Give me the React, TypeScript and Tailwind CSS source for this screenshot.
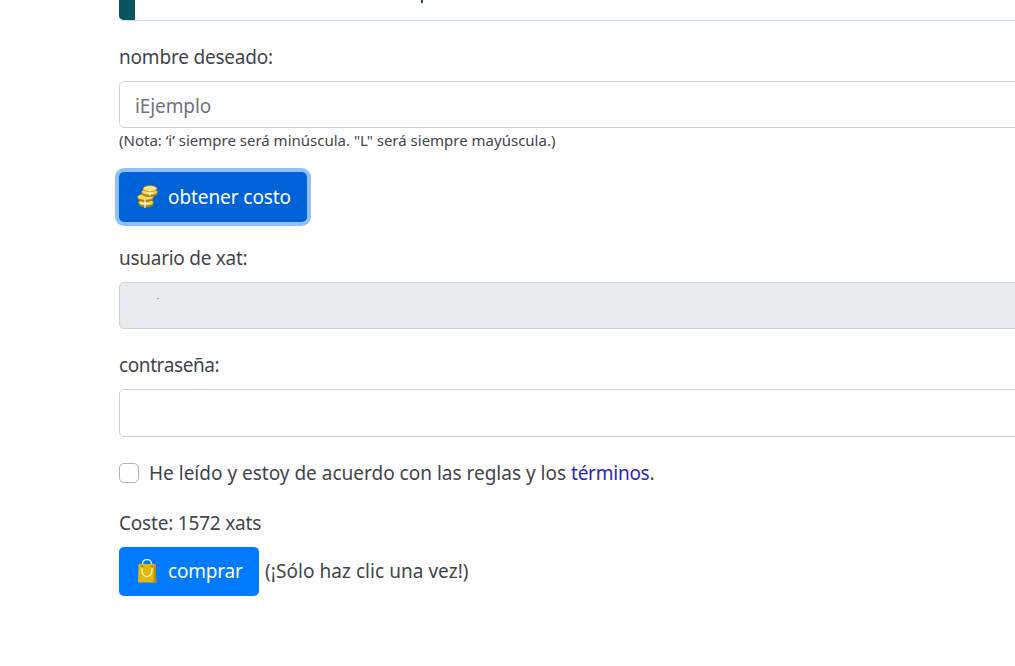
const FONT = "font-['Noto_Sans','Open_Sans',sans-serif]";

function CoinsIcon() {
  return (
    <svg width="22" height="24" viewBox="0 0 22 24" className="shrink-0">
      <ellipse cx="9" cy="19" rx="7.5" ry="3.6" fill="#a87f14" />
      <ellipse cx="9" cy="17.6" rx="7.5" ry="3.2" fill="#f7d24a" stroke="#9a7410" strokeWidth="0.6" />
      <ellipse cx="8.5" cy="13.5" rx="8" ry="3.4" fill="#a87f14" />
      <ellipse cx="8.5" cy="12" rx="8" ry="3.2" fill="#fadb58" stroke="#9a7410" strokeWidth="0.6" />
      <ellipse cx="12.5" cy="8.5" rx="8" ry="3.4" fill="#a87f14" />
      <ellipse cx="12.5" cy="7" rx="8" ry="3.2" fill="#f8d64e" stroke="#9a7410" strokeWidth="0.6" />
      <ellipse cx="13" cy="3.6" rx="7" ry="3" fill="#fde574" stroke="#9a7410" strokeWidth="0.6" />
      <path d="M8 23v-9M3.5 18.5h9" stroke="#fffdf0" strokeWidth="1.1" />
      <path d="M13 11V5M10 8h6" stroke="#fffdf0" strokeWidth="0.9" />
      <path d="M14 3h4" stroke="#fffdf0" strokeWidth="0.9" />
    </svg>
  );
}

function BagIcon() {
  return (
    <svg width="19" height="24" viewBox="0 0 19 24" className="shrink-0">
      <path d="M4.5 6V4.5A4 3.6 0 0 1 13.5 4.5V6" fill="none" stroke="#d7ebfd" strokeWidth="1.4" />
      <path d="M0.5 5h17l0.8 18.5H0z" fill="#e4b70e" />
      <path d="M16 5h1.5l0.8 18.5H15.5z" fill="#b98f06" />
      <path d="M4 8v4a5 5.5 0 0 0 10 0V8" fill="none" stroke="#fff8d8" strokeWidth="1.2" />
      <rect x="3.5" y="6.5" width="1.2" height="2" fill="#6b5a10" />
      <rect x="13.4" y="6.5" width="1.2" height="2" fill="#6b5a10" />
    </svg>
  );
}

export default function App() {
  return (
    <div className={`w-[1015px] h-[666px] overflow-hidden bg-white pl-[119px] text-[19px] leading-[28px] text-[#3f454b] ${FONT}`}>
      <div className="w-[1000px]">
        {/* alert, cut off by the top of the window */}
        <div className="flex h-[21px] overflow-hidden rounded-bl-[5px] border-b border-[#bee5eb]">
          <div className="w-4 bg-[#0c5460]" />
          <div className="ml-[286px] h-[3px] w-[2px] bg-[#0c5460]" />
        </div>

        <label className="mt-[22px] block tracking-[-0.2px]">nombre deseado:</label>
        <input
          placeholder="iEjemplo"
          className="mt-[10px] block h-[47px] w-full rounded-[5px] border border-[#ced4da] bg-white px-[15px] pt-[2px] tracking-[-0.1px] placeholder:text-[#6c757d]"
        />
        <p className="mt-[2px] text-[15px] leading-[21px]">(Nota: ‘i’ siempre será minúscula. "L" será siempre mayúscula.)</p>

        <button className="mt-[21px] flex h-[50px] w-[188px] items-center gap-[9px] rounded-[5px] bg-[#0062d9] pl-[18px] tracking-[-0.08px] text-white shadow-[0_0_0_4px_#8fc2fb]">
          <CoinsIcon />
          obtener costo
        </button>

        <label className="mt-[22px] block tracking-[-0.27px]">usuario de xat:</label>
        <div className="mt-[10px] h-[47px] w-full rounded-[5px] border border-[#ced4da] bg-[#e9ecef] pl-[37px] pt-[15px]">
          <div className="h-px w-[2px] bg-[#9aa0a6]" />
        </div>

        <label className="mt-[22px] block tracking-[-0.4px]">contraseña:</label>
        <input className="mt-[10px] block h-[48px] w-full rounded-[5px] border border-[#ced4da] bg-white px-[15px]" />

        <div className="mt-[22px] flex items-center gap-[10px]">
          <span className="h-5 w-5 rounded-[5px] border border-[#adb5bd] bg-white" />
          <span>
            He leído y estoy de acuerdo con las reglas y los{' '}
            <a className="tracking-[-0.25px] text-[#2a1fd0]">términos</a>.
          </span>
        </div>

        <p className="mt-[22px] tracking-[-0.2px]">Coste: 1572 xats</p>

        <div className="mt-[10px] flex items-center gap-[6px]">
          <button className="flex h-[49px] w-[140px] items-center gap-[11px] rounded-[5px] bg-[#007bff] pb-[2px] pl-[19px] tracking-[-0.2px] text-white">
            <BagIcon />
            comprar
          </button>
          <span className="pb-[2px] tracking-[0.05px]">(¡Sólo haz clic una vez!)</span>
        </div>
      </div>
    </div>
  );
}
